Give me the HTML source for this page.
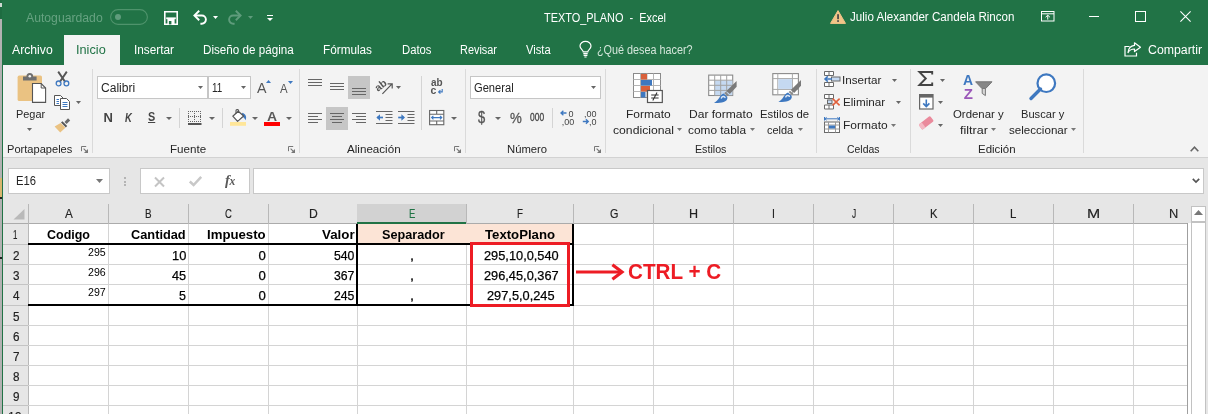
<!DOCTYPE html>
<html><head><meta charset="utf-8"><title>TEXTO_PLANO - Excel</title>
<style>
html,body{margin:0;padding:0;}
body{width:1208px;height:414px;position:relative;overflow:hidden;background:#fff;
font-family:"Liberation Sans",sans-serif;}
.t{position:absolute;white-space:pre;transform-origin:0 50%;font-family:"Liberation Sans",sans-serif;}
svg{overflow:visible;}
</style></head><body><div style="position:absolute;left:0;top:0;width:1208px;height:414px;will-change:transform">
<div style="position:absolute;left:0px;top:0px;width:1208px;height:65px;background:#217346;"></div>
<div style="position:absolute;left:64px;top:35px;width:56px;height:30px;background:#f3f3f3;"></div>
<div style="position:absolute;left:0px;top:65px;width:1208px;height:92px;background:#f3f3f3;"></div>
<div style="position:absolute;left:0px;top:157px;width:1208px;height:1px;background:#d2d2d2;"></div>
<div style="position:absolute;left:0px;top:158px;width:1208px;height:66px;background:#e6e6e6;"></div>
<div style="position:absolute;left:0px;top:0px;width:2px;height:19px;background:#1e6c41;"></div>
<div style="position:absolute;left:0px;top:3px;width:2px;height:4px;background:#cfd8d2;"></div>
<div style="position:absolute;left:0px;top:19px;width:2px;height:395px;background:#b2b2b2;"></div>
<div style="position:absolute;left:0px;top:178px;width:2px;height:19px;background:#d8b66e;"></div>
<div style="position:absolute;left:0px;top:197px;width:2px;height:2px;background:#222;"></div>
<div style="position:absolute;left:0px;top:257px;width:2px;height:2px;background:#222;"></div>
<div style="position:absolute;left:2px;top:0px;width:1px;height:414px;background:#217346;"></div>
<div style="position:absolute;left:92px;top:69px;width:1px;height:84px;background:#dadada;"></div>
<div style="position:absolute;left:299px;top:69px;width:1px;height:84px;background:#dadada;"></div>
<div style="position:absolute;left:465px;top:69px;width:1px;height:84px;background:#dadada;"></div>
<div style="position:absolute;left:605px;top:69px;width:1px;height:84px;background:#dadada;"></div>
<div style="position:absolute;left:816px;top:69px;width:1px;height:84px;background:#dadada;"></div>
<div style="position:absolute;left:910px;top:69px;width:1px;height:84px;background:#dadada;"></div>
<div style="position:absolute;left:1083px;top:69px;width:1px;height:84px;background:#dadada;"></div>
<div style="position:absolute;left:179px;top:108px;width:1px;height:20px;background:#d4d4d4;"></div>
<div style="position:absolute;left:222px;top:108px;width:1px;height:20px;background:#d4d4d4;"></div>
<div style="position:absolute;left:421px;top:76px;width:1px;height:54px;background:#d4d4d4;"></div>
<div style="position:absolute;left:552px;top:108px;width:1px;height:20px;background:#d4d4d4;"></div>
<div style="position:absolute;left:97px;top:76px;width:109px;height:21px;background:#fff;border:1px solid #c6c6c6;"></div>
<div style="position:absolute;left:208px;top:76px;width:41px;height:21px;background:#fff;border:1px solid #c6c6c6;"></div>
<div style="position:absolute;left:470px;top:76px;width:129px;height:21px;background:#fff;border:1px solid #c6c6c6;"></div>
<svg style="position:absolute;left:198.0px;top:86px" width="5" height="3" viewBox="0 0 5 3"><path d="M0 0H5L2.5 3Z" fill="#666"/></svg>
<svg style="position:absolute;left:240.5px;top:86px" width="5" height="3" viewBox="0 0 5 3"><path d="M0 0H5L2.5 3Z" fill="#666"/></svg>
<svg style="position:absolute;left:590.5px;top:86px" width="5" height="3" viewBox="0 0 5 3"><path d="M0 0H5L2.5 3Z" fill="#666"/></svg>
<div style="position:absolute;left:348px;top:76px;width:22px;height:23px;background:#c6c6c6;"></div>
<div style="position:absolute;left:326px;top:107px;width:22px;height:23px;background:#c6c6c6;"></div>
<svg style="position:absolute;left:81px;top:146px" width="7" height="7" viewBox="0 0 7 7"><path d="M0.5 5.2V0.5H5.2" fill="none" stroke="#777" stroke-width="1"/><path d="M2.6 2.6L5.6 5.6" stroke="#777" stroke-width="1.1"/><path d="M7 3V7H3Z" fill="#777"/></svg>
<svg style="position:absolute;left:288px;top:146px" width="7" height="7" viewBox="0 0 7 7"><path d="M0.5 5.2V0.5H5.2" fill="none" stroke="#777" stroke-width="1"/><path d="M2.6 2.6L5.6 5.6" stroke="#777" stroke-width="1.1"/><path d="M7 3V7H3Z" fill="#777"/></svg>
<svg style="position:absolute;left:454px;top:146px" width="7" height="7" viewBox="0 0 7 7"><path d="M0.5 5.2V0.5H5.2" fill="none" stroke="#777" stroke-width="1"/><path d="M2.6 2.6L5.6 5.6" stroke="#777" stroke-width="1.1"/><path d="M7 3V7H3Z" fill="#777"/></svg>
<svg style="position:absolute;left:594px;top:146px" width="7" height="7" viewBox="0 0 7 7"><path d="M0.5 5.2V0.5H5.2" fill="none" stroke="#777" stroke-width="1"/><path d="M2.6 2.6L5.6 5.6" stroke="#777" stroke-width="1.1"/><path d="M7 3V7H3Z" fill="#777"/></svg>
<svg style="position:absolute;left:1190px;top:146px" width="9" height="6" viewBox="0 0 9 6"><path d="M0.7 5.2L4.5 1.2L8.3 5.2" fill="none" stroke="#666" stroke-width="1.6"/></svg>
<div style="position:absolute;left:8px;top:168px;width:100px;height:24px;background:#fff;border:1px solid #c8c8c8;"></div>
<svg style="position:absolute;left:96.0px;top:179px" width="7" height="4" viewBox="0 0 7 4"><path d="M0 0H7L3.5 4Z" fill="#777"/></svg>
<div style="position:absolute;left:124px;top:177px;width:2px;height:2px;background:#b4b4b4;"></div>
<div style="position:absolute;left:124px;top:180.5px;width:2px;height:2px;background:#b4b4b4;"></div>
<div style="position:absolute;left:124px;top:184px;width:2px;height:2px;background:#b4b4b4;"></div>
<div style="position:absolute;left:140px;top:168px;width:108px;height:24px;background:#fff;border:1px solid #c8c8c8;"></div>
<div style="position:absolute;left:253px;top:168px;width:949px;height:24px;background:#fff;border:1px solid #c8c8c8;"></div>
<svg style="position:absolute;left:153.5px;top:176.5px" width="11" height="10" viewBox="0 0 11 10"><path d="M1 0.5L10 9.5M10 0.5L1 9.5" stroke="#c4c4c4" stroke-width="2" fill="none"/></svg>
<svg style="position:absolute;left:189px;top:176px" width="13" height="10" viewBox="0 0 13 10"><path d="M0.8 5.5L4.6 9L12.2 0.8" stroke="#c8c8c8" stroke-width="2.5" fill="none"/></svg>
<div class="t" style="left:225px;top:171px;font-family:'Liberation Serif',serif;font-style:italic;font-size:14.5px;line-height:18px;color:#5a5a5a;letter-spacing:-0.3px;font-weight:700">f<span style="font-size:11.5px">x</span></div>
<svg style="position:absolute;left:1192px;top:178px" width="8" height="5" viewBox="0 0 8 5"><path d="M0.8 0.8L4 4L7.2 0.8" fill="none" stroke="#555" stroke-width="1.7"/></svg>
<div style="position:absolute;left:28px;top:224px;width:1160px;height:190px;background:#fff;"></div>
<div style="position:absolute;left:3px;top:224px;width:25px;height:190px;background:#e6e6e6;"></div>
<div style="position:absolute;left:357px;top:204px;width:110px;height:18px;background:#d2d2d2;"></div>
<div style="position:absolute;left:357px;top:222px;width:110px;height:2px;background:#217346;"></div>
<div style="position:absolute;left:3px;top:223px;width:354px;height:1px;background:#ababab;"></div>
<div style="position:absolute;left:467px;top:223px;width:721px;height:1px;background:#ababab;"></div>
<div style="position:absolute;left:28px;top:204px;width:1px;height:20px;background:#b8b8b8;"></div>
<div style="position:absolute;left:108px;top:204px;width:1px;height:20px;background:#b8b8b8;"></div>
<div style="position:absolute;left:188px;top:204px;width:1px;height:20px;background:#b8b8b8;"></div>
<div style="position:absolute;left:268px;top:204px;width:1px;height:20px;background:#b8b8b8;"></div>
<div style="position:absolute;left:466px;top:204px;width:1px;height:20px;background:#b8b8b8;"></div>
<div style="position:absolute;left:573px;top:204px;width:1px;height:20px;background:#b8b8b8;"></div>
<div style="position:absolute;left:653px;top:204px;width:1px;height:20px;background:#b8b8b8;"></div>
<div style="position:absolute;left:733px;top:204px;width:1px;height:20px;background:#b8b8b8;"></div>
<div style="position:absolute;left:813px;top:204px;width:1px;height:20px;background:#b8b8b8;"></div>
<div style="position:absolute;left:893px;top:204px;width:1px;height:20px;background:#b8b8b8;"></div>
<div style="position:absolute;left:973px;top:204px;width:1px;height:20px;background:#b8b8b8;"></div>
<div style="position:absolute;left:1053px;top:204px;width:1px;height:20px;background:#b8b8b8;"></div>
<div style="position:absolute;left:1133px;top:204px;width:1px;height:20px;background:#b8b8b8;"></div>
<div style="position:absolute;left:108px;top:224px;width:1px;height:190px;background:#d4d4d4;"></div>
<div style="position:absolute;left:188px;top:224px;width:1px;height:190px;background:#d4d4d4;"></div>
<div style="position:absolute;left:268px;top:224px;width:1px;height:190px;background:#d4d4d4;"></div>
<div style="position:absolute;left:357px;top:224px;width:1px;height:190px;background:#d4d4d4;"></div>
<div style="position:absolute;left:466px;top:224px;width:1px;height:190px;background:#d4d4d4;"></div>
<div style="position:absolute;left:573px;top:224px;width:1px;height:190px;background:#d4d4d4;"></div>
<div style="position:absolute;left:653px;top:224px;width:1px;height:190px;background:#d4d4d4;"></div>
<div style="position:absolute;left:733px;top:224px;width:1px;height:190px;background:#d4d4d4;"></div>
<div style="position:absolute;left:813px;top:224px;width:1px;height:190px;background:#d4d4d4;"></div>
<div style="position:absolute;left:893px;top:224px;width:1px;height:190px;background:#d4d4d4;"></div>
<div style="position:absolute;left:973px;top:224px;width:1px;height:190px;background:#d4d4d4;"></div>
<div style="position:absolute;left:1053px;top:224px;width:1px;height:190px;background:#d4d4d4;"></div>
<div style="position:absolute;left:1133px;top:224px;width:1px;height:190px;background:#d4d4d4;"></div>
<div style="position:absolute;left:28px;top:224px;width:1px;height:190px;background:#b8b8b8;"></div>
<div style="position:absolute;left:28px;top:244px;width:1160px;height:1px;background:#d4d4d4;"></div>
<div style="position:absolute;left:3px;top:244px;width:25px;height:1px;background:#c4c4c4;"></div>
<div style="position:absolute;left:28px;top:264px;width:1160px;height:1px;background:#d4d4d4;"></div>
<div style="position:absolute;left:3px;top:264px;width:25px;height:1px;background:#c4c4c4;"></div>
<div style="position:absolute;left:28px;top:284px;width:1160px;height:1px;background:#d4d4d4;"></div>
<div style="position:absolute;left:3px;top:284px;width:25px;height:1px;background:#c4c4c4;"></div>
<div style="position:absolute;left:28px;top:305px;width:1160px;height:1px;background:#d4d4d4;"></div>
<div style="position:absolute;left:3px;top:305px;width:25px;height:1px;background:#c4c4c4;"></div>
<div style="position:absolute;left:28px;top:325px;width:1160px;height:1px;background:#d4d4d4;"></div>
<div style="position:absolute;left:3px;top:325px;width:25px;height:1px;background:#c4c4c4;"></div>
<div style="position:absolute;left:28px;top:345px;width:1160px;height:1px;background:#d4d4d4;"></div>
<div style="position:absolute;left:3px;top:345px;width:25px;height:1px;background:#c4c4c4;"></div>
<div style="position:absolute;left:28px;top:365px;width:1160px;height:1px;background:#d4d4d4;"></div>
<div style="position:absolute;left:3px;top:365px;width:25px;height:1px;background:#c4c4c4;"></div>
<div style="position:absolute;left:28px;top:385px;width:1160px;height:1px;background:#d4d4d4;"></div>
<div style="position:absolute;left:3px;top:385px;width:25px;height:1px;background:#c4c4c4;"></div>
<div style="position:absolute;left:28px;top:405px;width:1160px;height:1px;background:#d4d4d4;"></div>
<div style="position:absolute;left:3px;top:405px;width:25px;height:1px;background:#c4c4c4;"></div>
<div style="position:absolute;left:28px;top:425px;width:1160px;height:1px;background:#d4d4d4;"></div>
<div style="position:absolute;left:3px;top:425px;width:25px;height:1px;background:#c4c4c4;"></div>
<div style="position:absolute;left:358px;top:224px;width:214px;height:19px;background:#fce4d6;"></div>
<svg style="position:absolute;left:13px;top:209px" width="12" height="11" viewBox="0 0 12 11"><path d="M11.5 0V10.5H0.5Z" fill="#b9b9b9"/></svg>
<div style="position:absolute;left:28px;top:243px;width:546px;height:2px;background:#000;"></div>
<div style="position:absolute;left:28px;top:304px;width:546px;height:2px;background:#000;"></div>
<div style="position:absolute;left:356px;top:224px;width:2px;height:82px;background:#000;"></div>
<div style="position:absolute;left:572px;top:224px;width:2px;height:82px;background:#000;"></div>
<div style="position:absolute;left:470px;top:242px;width:94px;height:59px;background:transparent;border:3px solid #ed1c24;"></div>
<svg style="position:absolute;left:576px;top:262px" width="50" height="20" viewBox="0 0 50 20"><path d="M0 10H46" stroke="#ed1c24" stroke-width="3.2" fill="none"/><path d="M36.4 2.8L46 10L36.4 17.2" stroke="#ed1c24" stroke-width="3.2" fill="none" stroke-linejoin="miter"/></svg>
<div style="position:absolute;left:1188px;top:204px;width:20px;height:210px;background:#e6e6e6;"></div>
<div style="position:absolute;left:1187px;top:223px;width:1px;height:191px;background:#9f9f9f;"></div>
<div style="position:absolute;left:1188px;top:223px;width:3px;height:191px;background:#fff;"></div>
<div style="position:absolute;left:1191px;top:206px;width:13px;height:14px;background:#fff;border:1px solid #c2c2c2;"></div>
<div style="position:absolute;left:1191px;top:222px;width:13px;height:192px;background:#fff;border:1px solid #c2c2c2;"></div>
<svg style="position:absolute;left:1194px;top:210px" width="9" height="5" viewBox="0 0 9 5"><path d="M0 5L4.5 0L9 5Z" fill="#777"/></svg>
<svg style="position:absolute;left:110px;top:9px" width="38" height="16" viewBox="0 0 38 16"><rect x="0.6" y="0.6" width="36.8" height="14.8" rx="7.4" fill="none" stroke="#4f936c" stroke-width="1.1"/><circle cx="8" cy="8" r="3" fill="#5f9c7c"/></svg>
<svg style="position:absolute;left:164px;top:11px" width="14" height="14" viewBox="0 0 14 14"><path d="M0.8 0.8H13.2V13.2H0.8Z" fill="none" stroke="#fff" stroke-width="1.6"/><rect x="2.2" y="6.4" width="9.6" height="1.8" fill="#fff"/><rect x="3.4" y="8" width="7.2" height="5.2" fill="#fff"/><rect x="4.9" y="10" width="2.5" height="3.4" fill="#217346"/></svg>
<svg style="position:absolute;left:193px;top:10px" width="15" height="15" viewBox="0 0 15 15"><path d="M2.2 5.5H8.8A4.1 4.1 0 0 1 8.8 13.7H7.4" fill="none" stroke="#fff" stroke-width="1.9"/><path d="M6.2 0.8L1.4 5.5L6.2 10.2" fill="none" stroke="#fff" stroke-width="1.9"/></svg>
<svg style="position:absolute;left:213.0px;top:16px" width="5" height="3" viewBox="0 0 5 3"><path d="M0 0H5L2.5 3Z" fill="#fff"/></svg>
<svg style="position:absolute;left:227px;top:10px" width="15" height="15" viewBox="0 0 15 15"><path d="M12.8 5.5H6.2A4.1 4.1 0 0 0 6.2 13.7H7.6" fill="none" stroke="#5f9c7c" stroke-width="1.9"/><path d="M8.8 0.8L13.6 5.5L8.8 10.2" fill="none" stroke="#5f9c7c" stroke-width="1.9"/></svg>
<svg style="position:absolute;left:248.0px;top:16px" width="5" height="3" viewBox="0 0 5 3"><path d="M0 0H5L2.5 3Z" fill="#5f9c7c"/></svg>
<div style="position:absolute;left:266.5px;top:15px;width:6px;height:1px;background:#fff;"></div>
<svg style="position:absolute;left:266.5px;top:18px" width="6" height="3" viewBox="0 0 6 3"><path d="M0 0H6L3.0 3Z" fill="#fff"/></svg>
<svg style="position:absolute;left:829.5px;top:9.5px" width="16" height="14" viewBox="0 0 16 14"><path d="M8 0.6L15.5 13.4H0.5Z" fill="#f2c488" stroke="#f2c488" stroke-width="1" stroke-linejoin="round"/><rect x="7.2" y="4.2" width="1.7" height="5" fill="#444"/><rect x="7.2" y="10.2" width="1.7" height="1.7" fill="#444"/></svg>
<svg style="position:absolute;left:1041px;top:11px" width="14" height="11" viewBox="0 0 14 11"><rect x="0.5" y="0.5" width="12.5" height="9.5" fill="none" stroke="#fff" stroke-width="1"/><path d="M0.5 2.8H13" stroke="#fff" stroke-width="1"/><path d="M6.75 8.6V4.4M4.6 6.2L6.75 4.2L8.9 6.2" fill="none" stroke="#fff" stroke-width="1"/></svg>
<div style="position:absolute;left:1088.5px;top:16px;width:10.5px;height:1px;background:#fff;"></div>
<div style="position:absolute;left:1135px;top:11px;width:9px;height:9px;background:transparent;border:1px solid #fff;"></div>
<svg style="position:absolute;left:1180px;top:11px" width="11" height="11" viewBox="0 0 11 11"><path d="M0.4 0.4L10.6 10.6M10.6 0.4L0.4 10.6" stroke="#fff" stroke-width="1.1"/></svg>
<svg style="position:absolute;left:579px;top:41px" width="13" height="17" viewBox="0 0 13 17"><path d="M4.2 10.8C4.2 9 1 7.8 1 5A5.5 4.6 0 0 1 12 5C12 7.8 8.8 9 8.8 10.8Z" fill="none" stroke="#fff" stroke-width="1.2"/><path d="M4.3 12.6H8.7M4.6 14.4H8.4M5.4 16H7.6" stroke="#fff" stroke-width="1.1"/></svg>
<svg style="position:absolute;left:1124px;top:42px" width="18" height="15" viewBox="0 0 18 15"><path d="M5.5 4.5H1V14H12.5V10.8" fill="none" stroke="#fff" stroke-width="1.2"/><path d="M10.5 0.8L16.5 5.2L10.5 9.6V7C7.5 7 5.4 8.2 4 10.6C4.4 6.4 6.8 3.8 10.5 3.4Z" fill="none" stroke="#fff" stroke-width="1.2" stroke-linejoin="round"/></svg>
<svg style="position:absolute;left:17px;top:72px" width="30" height="32" viewBox="0 0 30 32"><rect x="0.6" y="3.6" width="24.4" height="25.4" rx="1.6" fill="#eac282"/><path d="M6 8.4V4.6H9.4A3.4 3.6 0 0 1 16.2 4.6H19.6V8.4Z" fill="#707070"/><circle cx="12.8" cy="4.2" r="1.3" fill="#f3f3f3"/><path d="M15.5 11.5H24.2L28.6 16V30.4H15.5Z" fill="#fff" stroke="#555" stroke-width="1.1"/><path d="M24.2 11.5V16H28.6" fill="none" stroke="#555" stroke-width="1"/></svg>
<svg style="position:absolute;left:27.0px;top:128px" width="5" height="3" viewBox="0 0 5 3"><path d="M0 0H5L2.5 3Z" fill="#666"/></svg>
<svg style="position:absolute;left:55px;top:71px" width="15" height="16" viewBox="0 0 15 16"><path d="M3.2 0.6L10.4 11.2M11.8 0.6L4.6 11.2" stroke="#555" stroke-width="1.9" fill="none"/><circle cx="3.6" cy="12.4" r="2.4" fill="none" stroke="#3e78c0" stroke-width="1.3"/><circle cx="11.4" cy="12.4" r="2.4" fill="none" stroke="#3e78c0" stroke-width="1.3"/></svg>
<svg style="position:absolute;left:53.5px;top:95px" width="17" height="15" viewBox="0 0 17 15"><path d="M0.5 0.5H6.5L9 3V10.5H0.5Z" fill="#fff" stroke="#555" stroke-width="1"/><path d="M6.5 3.5H12.5L15.5 6.5V14.5H6.5Z" fill="#fff" stroke="#555" stroke-width="1"/><path d="M2.5 4.5H5M2.5 6.5H5M2.5 8.5H5" stroke="#3e78c0" stroke-width="1"/><path d="M8.5 7.5H13.5M8.5 9.5H13.5M8.5 11.5H13.5" stroke="#3e78c0" stroke-width="1"/></svg>
<svg style="position:absolute;left:75.5px;top:101px" width="5" height="3" viewBox="0 0 5 3"><path d="M0 0H5L2.5 3Z" fill="#666"/></svg>
<svg style="position:absolute;left:54px;top:117px" width="17" height="16" viewBox="0 0 17 16"><path d="M10.5 5L14 1.2L16.2 3.4L12.6 7Z" fill="#6a6a6a"/><path d="M8.4 4.2L13.2 9L11.8 10.4L7 5.6Z" fill="#555"/><path d="M6.6 6L11.4 10.8L6.2 15.4L0.6 9.4Z" fill="#eac282"/></svg>
<div class="t" style="left:257.3px;top:79px;font-size:15px;line-height:18px;color:#555;transform:scaleX(0.95)">A</div>
<svg style="position:absolute;left:265.5px;top:80px" width="5" height="3" viewBox="0 0 5 3"><path d="M0 3L2.5 0L5 3Z" fill="#3e78c0"/></svg>
<div class="t" style="left:279.5px;top:82px;font-size:12px;line-height:15px;color:#555;transform:scaleX(0.95)">A</div>
<svg style="position:absolute;left:287.5px;top:80.5px" width="5" height="3" viewBox="0 0 5 3"><path d="M0 0H5L2.5 3Z" fill="#3e78c0"/></svg>
<svg style="position:absolute;left:188px;top:111px" width="14" height="15" viewBox="0 0 14 15"><rect x="0" y="0" width="1" height="1" fill="#666"/><rect x="2" y="0" width="1" height="1" fill="#666"/><rect x="4" y="0" width="1" height="1" fill="#666"/><rect x="6" y="0" width="1" height="1" fill="#666"/><rect x="8" y="0" width="1" height="1" fill="#666"/><rect x="10" y="0" width="1" height="1" fill="#666"/><rect x="12" y="0" width="1" height="1" fill="#666"/><rect x="0" y="2" width="1" height="1" fill="#666"/><rect x="6" y="2" width="1" height="1" fill="#666"/><rect x="12" y="2" width="1" height="1" fill="#666"/><rect x="0" y="4" width="1" height="1" fill="#666"/><rect x="6" y="4" width="1" height="1" fill="#666"/><rect x="12" y="4" width="1" height="1" fill="#666"/><rect x="0" y="5" width="1" height="1" fill="#666"/><rect x="2" y="5" width="1" height="1" fill="#666"/><rect x="4" y="5" width="1" height="1" fill="#666"/><rect x="6" y="5" width="1" height="1" fill="#666"/><rect x="8" y="5" width="1" height="1" fill="#666"/><rect x="10" y="5" width="1" height="1" fill="#666"/><rect x="12" y="5" width="1" height="1" fill="#666"/><rect x="0" y="6" width="1" height="1" fill="#666"/><rect x="6" y="6" width="1" height="1" fill="#666"/><rect x="12" y="6" width="1" height="1" fill="#666"/><rect x="0" y="8" width="1" height="1" fill="#666"/><rect x="6" y="8" width="1" height="1" fill="#666"/><rect x="12" y="8" width="1" height="1" fill="#666"/><rect x="0" y="10" width="1" height="1" fill="#666"/><rect x="2" y="10" width="1" height="1" fill="#666"/><rect x="4" y="10" width="1" height="1" fill="#666"/><rect x="6" y="10" width="1" height="1" fill="#666"/><rect x="8" y="10" width="1" height="1" fill="#666"/><rect x="10" y="10" width="1" height="1" fill="#666"/><rect x="12" y="10" width="1" height="1" fill="#666"/><rect x="0" y="12" width="13.5" height="2" fill="#555"/></svg>
<svg style="position:absolute;left:208.5px;top:116.6px" width="6" height="3" viewBox="0 0 6 3"><path d="M0 0H6L3.0 3Z" fill="#666"/></svg>
<svg style="position:absolute;left:230px;top:109px" width="17" height="18" viewBox="0 0 17 18"><path d="M12.2 3.8C15.8 4.8 17 8 15.6 11.2C14.8 9.2 13.6 8 11.8 7.4Z" fill="#3e78c0"/><path d="M2.8 7.2L8.2 2.2L13.6 7L7.6 12.4Z" fill="#fff" stroke="#555" stroke-width="1.2" stroke-linejoin="round"/><path d="M6 4.6V1.6Q6 0.6 7 0.6H7.6Q8.6 0.6 8.6 1.6V3.2" fill="none" stroke="#555" stroke-width="1.1"/><rect x="0" y="13" width="16" height="3.8" fill="#ffe699"/></svg>
<svg style="position:absolute;left:251.5px;top:116.6px" width="6" height="3" viewBox="0 0 6 3"><path d="M0 0H6L3.0 3Z" fill="#666"/></svg>
<div class="t" style="left:267.3px;top:107.8px;font-size:13.6px;line-height:18px;color:#5a5a5a;font-weight:700;transform:scaleX(1.03)">A</div>
<div style="position:absolute;left:264px;top:122px;width:16px;height:3.8px;background:#ff0000;"></div>
<svg style="position:absolute;left:285.5px;top:116.6px" width="6" height="3" viewBox="0 0 6 3"><path d="M0 0H6L3.0 3Z" fill="#666"/></svg>
<svg style="position:absolute;left:165.5px;top:116.6px" width="6" height="3" viewBox="0 0 6 3"><path d="M0 0H6L3.0 3Z" fill="#666"/></svg>
<div style="position:absolute;left:308px;top:79px;width:14px;height:1px;background:#666;"></div><div style="position:absolute;left:308px;top:82px;width:14px;height:1px;background:#666;"></div><div style="position:absolute;left:308px;top:85px;width:14px;height:1px;background:#666;"></div>
<div style="position:absolute;left:330px;top:83px;width:14px;height:1px;background:#666;"></div><div style="position:absolute;left:330px;top:86px;width:14px;height:1px;background:#666;"></div><div style="position:absolute;left:330px;top:89px;width:14px;height:1px;background:#666;"></div>
<div style="position:absolute;left:352px;top:88px;width:14px;height:1px;background:#666;"></div><div style="position:absolute;left:352px;top:91px;width:14px;height:1px;background:#666;"></div><div style="position:absolute;left:352px;top:94px;width:14px;height:1px;background:#666;"></div>
<div style="position:absolute;left:308px;top:113.0px;width:14px;height:1px;background:#666;"></div><div style="position:absolute;left:308px;top:116.05px;width:10px;height:1px;background:#666;"></div><div style="position:absolute;left:308px;top:119.1px;width:14px;height:1px;background:#666;"></div><div style="position:absolute;left:308px;top:122.15px;width:10px;height:1px;background:#666;"></div>
<div style="position:absolute;left:330.0px;top:113.0px;width:14px;height:1px;background:#666;"></div><div style="position:absolute;left:332.0px;top:116.05px;width:10px;height:1px;background:#666;"></div><div style="position:absolute;left:330.0px;top:119.1px;width:14px;height:1px;background:#666;"></div><div style="position:absolute;left:332.0px;top:122.15px;width:10px;height:1px;background:#666;"></div>
<div style="position:absolute;left:352px;top:113.0px;width:14px;height:1px;background:#666;"></div><div style="position:absolute;left:356px;top:116.05px;width:10px;height:1px;background:#666;"></div><div style="position:absolute;left:352px;top:119.1px;width:14px;height:1px;background:#666;"></div><div style="position:absolute;left:356px;top:122.15px;width:10px;height:1px;background:#666;"></div>
<svg style="position:absolute;left:376px;top:79px" width="17" height="16" viewBox="0 0 17 16"><text x="-0.5" y="10" font-family="Liberation Sans" font-size="10.5" fill="#555" font-weight="700" transform="rotate(-38 5 8)">ab</text><path d="M6.4 14.8L15.8 5.2M16.2 9.4V4.8H11.6" fill="none" stroke="#555" stroke-width="1.2"/></svg>
<svg style="position:absolute;left:396.0px;top:86px" width="5" height="3" viewBox="0 0 5 3"><path d="M0 0H5L2.5 3Z" fill="#666"/></svg>
<svg style="position:absolute;left:376px;top:111px" width="17" height="14" viewBox="0 0 17 14"><path d="M0 0.5H16.5M9.5 3.5H16.5M9.5 6.5H16.5M9.5 9.5H16.5M0 12.5H16.5" stroke="#666" stroke-width="1"/><path d="M7 6.5H1.2" fill="none" stroke="#3e78c0" stroke-width="1.7"/><path d="M4 3.2L0.4 6.5L4 9.8Z" fill="#3e78c0"/></svg>
<svg style="position:absolute;left:397.5px;top:111px" width="17" height="14" viewBox="0 0 17 14"><path d="M0 0.5H16.5M9.5 3.5H16.5M9.5 6.5H16.5M9.5 9.5H16.5M0 12.5H16.5" stroke="#666" stroke-width="1"/><path d="M0.2 6.5H6" fill="none" stroke="#3e78c0" stroke-width="1.7"/><path d="M3.4 3.2L7 6.5L3.4 9.8Z" fill="#3e78c0"/></svg>
<div class="t" style="left:430.5px;top:76.5px;font-size:10.5px;line-height:10px;color:#555;font-weight:700;transform:scaleX(0.95)">ab</div>
<div class="t" style="left:430.5px;top:85px;font-size:10.5px;line-height:10px;color:#555;font-weight:700">c</div>
<svg style="position:absolute;left:437.8px;top:88.6px" width="5" height="5" viewBox="0 0 5 5"><path d="M4.2 0V2.9H0.8M2.4 1.2L0.6 2.9L2.4 4.6" fill="none" stroke="#3e78c0" stroke-width="1.1"/></svg>
<svg style="position:absolute;left:429px;top:110px" width="16" height="15" viewBox="0 0 16 15"><rect x="0.6" y="0.5" width="14.2" height="14.2" fill="#fff" stroke="#666" stroke-width="1.1"/><path d="M0.6 4.2H14.8M0.6 11H14.8M7.7 0.5V4.2M7.7 11V14.7" stroke="#666" stroke-width="1.1"/><path d="M2.6 7.6H12.8M4.4 5.9L2.6 7.6L4.4 9.3M11 5.9L12.8 7.6L11 9.3" fill="none" stroke="#3e78c0" stroke-width="1.1"/></svg>
<svg style="position:absolute;left:450.5px;top:116.6px" width="6" height="3" viewBox="0 0 6 3"><path d="M0 0H6L3.0 3Z" fill="#666"/></svg>
<svg style="position:absolute;left:494.5px;top:116.6px" width="6" height="3" viewBox="0 0 6 3"><path d="M0 0H6L3.0 3Z" fill="#666"/></svg>
<svg style="position:absolute;left:560px;top:110px" width="15" height="15" viewBox="0 0 15 15"><path d="M6.5 3H1.2M3.4 0.8L1 3L3.4 5.2" fill="none" stroke="#3e78c0" stroke-width="1.3"/><text x="8.6" y="6.8" font-family="Liberation Sans" font-size="9" fill="#444">0</text><text x="1.8" y="15" font-family="Liberation Sans" font-size="9" fill="#444">,00</text></svg>
<svg style="position:absolute;left:582px;top:110px" width="15" height="15" viewBox="0 0 15 15"><path d="M0.8 11.5H6.1M3.9 9.3L6.3 11.5L3.9 13.7" fill="none" stroke="#3e78c0" stroke-width="1.3"/><text x="2" y="6.8" font-family="Liberation Sans" font-size="9" fill="#444">,00</text><text x="7" y="15" font-family="Liberation Sans" font-size="9" fill="#444">,0</text></svg>
<svg style="position:absolute;left:633px;top:72.5px" width="31" height="31" viewBox="0 0 31 31"><rect x="0.5" y="0.5" width="27" height="24" fill="#fff" stroke="#8a8a8a" stroke-width="1"/><path d="M0.5 6.5H27.5M0.5 12.5H27.5M0.5 18.5H27.5M7.5 0.5V24.5M14 0.5V24.5M20.5 0.5V24.5" stroke="#b5b5b5" stroke-width="1"/><rect x="8" y="1" width="6" height="5.5" fill="#d9603b"/><rect x="8" y="7" width="11" height="5.5" fill="#3e78c0"/><rect x="8" y="13" width="9" height="5.5" fill="#d9603b"/><rect x="8" y="19" width="4.5" height="5.5" fill="#3e78c0"/><rect x="14.5" y="17.5" width="14.8" height="12" fill="#fff" stroke="#555" stroke-width="1.2"/><path d="M18.2 22H25.6M18.2 25H25.6M24 19.6L19.8 27.6" stroke="#333" stroke-width="1.1" fill="none"/></svg>
<svg style="position:absolute;left:677.0px;top:128.2px" width="5" height="3" viewBox="0 0 5 3"><path d="M0 0H5L2.5 3Z" fill="#777"/></svg>
<svg style="position:absolute;left:707.5px;top:74px" width="31" height="30" viewBox="0 0 31 30"><rect x="0.7" y="1.1" width="24" height="20.4" fill="#fff" stroke="#8a8a8a" stroke-width="1.1"/><rect x="6.8" y="6.4" width="17.6" height="14.8" fill="#c5d9f1"/><path d="M0.7 6.2H24.7M0.7 11.3H24.7M0.7 16.4H24.7M6.7 1.1V21.5M12.7 1.1V21.5M18.7 1.1V21.5" stroke="#a2a2a2" stroke-width="1"/><g transform="translate(5.8 6.6)"><path d="M22.8 0.4V6.2L16 13.4L12.6 10.4Z" fill="#7a7a7a"/><path d="M11.8 11.2L15.2 14.2L13.8 15.6L10.4 12.6Z" fill="#8a8a8a"/><path d="M9.8 13C5.4 14.6 5.6 20 0.2 22.2C8.4 23.2 14.8 20.8 13.4 16.2Z" fill="#3e78c0"/><path d="M7.6 17.4C8.4 15.6 10.2 15.4 11.2 16.8" stroke="#dbe7f6" stroke-width="1.5" fill="none" stroke-linecap="round"/></g></svg>
<svg style="position:absolute;left:750.0px;top:128.2px" width="5" height="3" viewBox="0 0 5 3"><path d="M0 0H5L2.5 3Z" fill="#777"/></svg>
<svg style="position:absolute;left:771.5px;top:72.5px" width="31" height="30" viewBox="0 0 31 30"><rect x="0.8" y="0.6" width="25.6" height="21.2" fill="#fff" stroke="#8a8a8a" stroke-width="1.1"/><path d="M0.8 5.6H26.4M0.8 16.4H26.4M5.8 0.6V21.8M20.4 0.6V21.8" stroke="#a8a8a8" stroke-width="1"/><rect x="6.3" y="6.1" width="13.6" height="9.8" fill="#c5d9f1"/><g transform="translate(6.2 6.5)"><path d="M22.8 0.4V6.2L16 13.4L12.6 10.4Z" fill="#7a7a7a"/><path d="M11.8 11.2L15.2 14.2L13.8 15.6L10.4 12.6Z" fill="#8a8a8a"/><path d="M9.8 13C5.4 14.6 5.6 20 0.2 22.2C8.4 23.2 14.8 20.8 13.4 16.2Z" fill="#3e78c0"/><path d="M7.6 17.4C8.4 15.6 10.2 15.4 11.2 16.8" stroke="#dbe7f6" stroke-width="1.5" fill="none" stroke-linecap="round"/></g></svg>
<svg style="position:absolute;left:798.0px;top:128.2px" width="5" height="3" viewBox="0 0 5 3"><path d="M0 0H5L2.5 3Z" fill="#777"/></svg>
<svg style="position:absolute;left:824px;top:71px" width="17" height="16" viewBox="0 0 17 16"><path d="M0.5 0.5H9.5V4.5H0.5ZM5 0.5V4.5M0.5 11.5H9.5V15.5H0.5ZM5 11.5V15.5" fill="#fff" stroke="#6a6a6a" stroke-width="1"/><rect x="7.5" y="6" width="8.5" height="4" fill="#c5d9f1" stroke="#6a6a6a" stroke-width="1"/><path d="M8 8H1.2M3.8 5.4L1 8L3.8 10.6" fill="none" stroke="#3e78c0" stroke-width="1.5"/></svg>
<svg style="position:absolute;left:892.0px;top:79px" width="5" height="3" viewBox="0 0 5 3"><path d="M0 0H5L2.5 3Z" fill="#666"/></svg>
<svg style="position:absolute;left:824px;top:94px" width="17" height="16" viewBox="0 0 17 16"><path d="M0.5 0.5H9.5V4.5H0.5ZM5 0.5V4.5M0.5 11H9.5V15H0.5ZM5 11V15" fill="#fff" stroke="#6a6a6a" stroke-width="1"/><rect x="3.5" y="6" width="4.5" height="3.5" fill="#c5d9f1" stroke="#6a6a6a" stroke-width="1"/><path d="M8.6 4.6L15.6 11.4M15.6 4.6L8.6 11.4" stroke="#e0603c" stroke-width="1.6" fill="none"/></svg>
<svg style="position:absolute;left:896.0px;top:101px" width="5" height="3" viewBox="0 0 5 3"><path d="M0 0H5L2.5 3Z" fill="#666"/></svg>
<svg style="position:absolute;left:824px;top:116.5px" width="17" height="16" viewBox="0 0 17 16"><path d="M0.5 0V3.6M15.5 0V3.6M0.5 1.8H15.5M2.6 0.4L0.8 1.8L2.6 3.2M13.4 0.4L15.2 1.8L13.4 3.2" stroke="#3e78c0" stroke-width="1" fill="none"/><rect x="0.5" y="5" width="15" height="10.5" fill="#fff" stroke="#6a6a6a" stroke-width="1"/><path d="M0.5 8H15.5M0.5 12H15.5M4.5 5V15.5M11.5 5V15.5" stroke="#9a9a9a" stroke-width="1"/><rect x="5" y="8.5" width="6" height="3" fill="#3e78c0"/></svg>
<svg style="position:absolute;left:891.0px;top:124px" width="5" height="3" viewBox="0 0 5 3"><path d="M0 0H5L2.5 3Z" fill="#777"/></svg>
<svg style="position:absolute;left:918px;top:70.5px" width="16" height="15" viewBox="0 0 16 15"><path d="M14.2 3.6V1H1.4L7.8 7.5L1.4 14H14.2V11.4" fill="none" stroke="#444" stroke-width="1.9" stroke-linejoin="miter"/></svg>
<svg style="position:absolute;left:940.0px;top:79px" width="5" height="3" viewBox="0 0 5 3"><path d="M0 0H5L2.5 3Z" fill="#666"/></svg>
<svg style="position:absolute;left:918.5px;top:94px" width="15" height="16" viewBox="0 0 15 16"><rect x="0.6" y="0.6" width="13.4" height="14.4" fill="#fff" stroke="#666" stroke-width="1.2"/><rect x="0.6" y="0.6" width="13.4" height="3" fill="#666"/><path d="M7.3 5.6V12.4M4.2 9.4L7.3 12.6L10.4 9.4" fill="none" stroke="#3e78c0" stroke-width="1.6"/></svg>
<svg style="position:absolute;left:938.0px;top:101px" width="5" height="3" viewBox="0 0 5 3"><path d="M0 0H5L2.5 3Z" fill="#666"/></svg>
<svg style="position:absolute;left:919px;top:117.5px" width="14" height="10" viewBox="0 0 14 10"><g transform="rotate(-38 7 5)"><rect x="0" y="1.8" width="14.5" height="6.4" rx="1.2" fill="#ea8a9c"/><rect x="0" y="1.8" width="4" height="6.4" rx="1.2" fill="#f4b9c4"/></g></svg>
<svg style="position:absolute;left:938.0px;top:124px" width="5" height="3" viewBox="0 0 5 3"><path d="M0 0H5L2.5 3Z" fill="#666"/></svg>
<div class="t" style="left:963.4px;top:71.6px;font-size:15px;line-height:16px;color:#3e78c0;font-weight:700;transform:scaleX(0.93)">A</div>
<div class="t" style="left:963.8px;top:85.8px;font-size:15px;line-height:16px;color:#9a57b8;font-weight:700;transform:scaleX(1.0)">Z</div>
<svg style="position:absolute;left:975px;top:80.5px" width="18" height="16" viewBox="0 0 18 16"><path d="M0.6 0.8H17L10.6 7.6H7Z" fill="#878787" stroke="#777" stroke-width="1" stroke-linejoin="round"/><path d="M7.2 7.4H10.4V14.6L7.2 12.4Z" fill="#d8d8d8" stroke="#777" stroke-width="1"/></svg>
<svg style="position:absolute;left:991.0px;top:128.2px" width="5" height="3" viewBox="0 0 5 3"><path d="M0 0H5L2.5 3Z" fill="#777"/></svg>
<svg style="position:absolute;left:1029px;top:73px" width="28" height="28" viewBox="0 0 28 28"><circle cx="17.3" cy="10.2" r="8.8" fill="#fff" stroke="#3e78c0" stroke-width="2.2"/><path d="M11.5 16L2 25.5" stroke="#3e78c0" stroke-width="3.4" stroke-linecap="round"/></svg>
<svg style="position:absolute;left:1071.0px;top:128.2px" width="5" height="3" viewBox="0 0 5 3"><path d="M0 0H5L2.5 3Z" fill="#777"/></svg>
<div class="t" style="left:26.00px;top:9.50px;font-size:12px;line-height:17px;color:#66a281;transform:scaleX(1.0168);">Autoguardado</div>
<div class="t" style="left:544.30px;top:9.80px;font-size:12px;line-height:17px;color:#ffffff;transform:scaleX(0.9110);">TEXTO_PLANO  -  Excel</div>
<div class="t" style="left:850.00px;top:8.80px;font-size:12px;line-height:17px;color:#ffffff;transform:scaleX(0.9671);">Julio Alexander Candela Rincon</div>
<div class="t" style="left:12.00px;top:41.50px;font-size:12px;line-height:17px;color:#ffffff;transform:scaleX(1.0164);">Archivo</div>
<div class="t" style="left:75.94px;top:41.50px;font-size:12px;line-height:17px;color:#217346;transform:scaleX(1.0607);">Inicio</div>
<div class="t" style="left:134.02px;top:41.50px;font-size:12px;line-height:17px;color:#ffffff;transform:scaleX(0.9827);">Insertar</div>
<div class="t" style="left:203.00px;top:41.50px;font-size:12px;line-height:17px;color:#ffffff;transform:scaleX(0.9709);">Diseño de página</div>
<div class="t" style="left:323.00px;top:41.50px;font-size:12px;line-height:17px;color:#ffffff;transform:scaleX(0.9798);">Fórmulas</div>
<div class="t" style="left:401.50px;top:41.50px;font-size:12px;line-height:17px;color:#ffffff;transform:scaleX(0.9411);">Datos</div>
<div class="t" style="left:460.00px;top:41.50px;font-size:12px;line-height:17px;color:#ffffff;transform:scaleX(0.9095);">Revisar</div>
<div class="t" style="left:526.00px;top:41.50px;font-size:12px;line-height:17px;color:#ffffff;transform:scaleX(0.9333);">Vista</div>
<div class="t" style="left:597.20px;top:41.80px;font-size:12px;line-height:17px;color:#d3e6da;transform:scaleX(0.9004);">¿Qué desea hacer?</div>
<div class="t" style="left:1148.00px;top:41.50px;font-size:12px;line-height:17px;color:#ffffff;transform:scaleX(1.0251);">Compartir</div>
<div class="t" style="left:15.50px;top:106.50px;font-size:11px;line-height:15px;color:#262626;transform:scaleX(0.9936);">Pegar</div>
<div class="t" style="left:6.70px;top:141.50px;font-size:11px;line-height:15px;color:#262626;transform:scaleX(1.0073);">Portapapeles</div>
<div class="t" style="left:100.50px;top:79.50px;font-size:12px;line-height:17px;color:#262626;transform:scaleX(1.0047);">Calibri</div>
<div class="t" style="left:212.00px;top:79.50px;font-size:12px;line-height:17px;color:#262626;transform:scaleX(0.8214);">11</div>
<div class="t" style="left:103.50px;top:108.50px;font-size:13px;line-height:18px;color:#444;transform:scaleX(1.0000);font-weight:700;">N</div>
<div class="t" style="left:125.00px;top:108.50px;font-size:13px;line-height:18px;color:#444;transform:scaleX(0.7273);font-weight:700;font-style:italic;">K</div>
<div class="t" style="left:148.30px;top:108.30px;font-size:13px;line-height:18px;color:#444;transform:scaleX(0.8333);font-weight:700;text-decoration:underline;">S</div>
<div class="t" style="left:170.00px;top:141.50px;font-size:11px;line-height:15px;color:#262626;transform:scaleX(1.0548);">Fuente</div>
<div class="t" style="left:347.00px;top:141.50px;font-size:11px;line-height:15px;color:#262626;transform:scaleX(1.0565);">Alineación</div>
<div class="t" style="left:473.50px;top:79.50px;font-size:12px;line-height:17px;color:#262626;transform:scaleX(0.9280);">General</div>
<div class="t" style="left:477.70px;top:106.20px;font-size:17px;line-height:24px;color:#555;transform:scaleX(0.7600);-webkit-text-stroke:0.35px #555;">$</div>
<div class="t" style="left:509.50px;top:107.30px;font-size:15.5px;line-height:22px;color:#555;transform:scaleX(0.8571);-webkit-text-stroke:0.3px #555;">%</div>
<div class="t" style="left:530.00px;top:110.00px;font-size:10.5px;line-height:15px;color:#444;transform:scaleX(0.8032);-webkit-text-stroke:0.3px #444;">000</div>
<div class="t" style="left:507.00px;top:141.50px;font-size:11px;line-height:15px;color:#262626;transform:scaleX(1.0255);">Número</div>
<div class="t" style="left:625.50px;top:106.50px;font-size:11px;line-height:15px;color:#262626;transform:scaleX(1.0897);">Formato</div>
<div class="t" style="left:612.50px;top:122.50px;font-size:11px;line-height:15px;color:#262626;transform:scaleX(1.1082);">condicional</div>
<div class="t" style="left:689.00px;top:106.50px;font-size:11px;line-height:15px;color:#262626;transform:scaleX(1.0957);">Dar formato</div>
<div class="t" style="left:687.70px;top:122.50px;font-size:11px;line-height:15px;color:#262626;transform:scaleX(1.0788);">como tabla</div>
<div class="t" style="left:760.00px;top:106.50px;font-size:11px;line-height:15px;color:#262626;transform:scaleX(1.0300);">Estilos de</div>
<div class="t" style="left:767.40px;top:122.50px;font-size:11px;line-height:15px;color:#262626;transform:scaleX(0.9971);">celda</div>
<div class="t" style="left:694.50px;top:141.50px;font-size:11px;line-height:15px;color:#262626;transform:scaleX(0.9697);">Estilos</div>
<div class="t" style="left:842.24px;top:72.50px;font-size:11px;line-height:15px;color:#262626;transform:scaleX(1.0566);">Insertar</div>
<div class="t" style="left:843.30px;top:95.00px;font-size:11px;line-height:15px;color:#262626;transform:scaleX(1.0607);">Eliminar</div>
<div class="t" style="left:843.30px;top:118.00px;font-size:11px;line-height:15px;color:#262626;transform:scaleX(1.0897);">Formato</div>
<div class="t" style="left:846.70px;top:141.50px;font-size:11px;line-height:15px;color:#262626;transform:scaleX(0.9470);">Celdas</div>
<div class="t" style="left:952.50px;top:106.50px;font-size:11px;line-height:15px;color:#262626;transform:scaleX(1.0362);">Ordenar y</div>
<div class="t" style="left:959.80px;top:122.50px;font-size:11px;line-height:15px;color:#262626;transform:scaleX(1.1380);">filtrar</div>
<div class="t" style="left:1021.00px;top:106.50px;font-size:11px;line-height:15px;color:#262626;transform:scaleX(1.0117);">Buscar y</div>
<div class="t" style="left:1009.00px;top:122.50px;font-size:11px;line-height:15px;color:#262626;transform:scaleX(1.0540);">seleccionar</div>
<div class="t" style="left:978.00px;top:141.50px;font-size:11px;line-height:15px;color:#262626;transform:scaleX(1.0428);">Edición</div>
<div class="t" style="left:15.50px;top:173.10px;font-size:12px;line-height:17px;color:#262626;transform:scaleX(0.9364);">E16</div>
<div class="t" style="left:64.80px;top:204.50px;font-size:13.2px;line-height:18px;color:#222222;transform:scaleX(0.8889);-webkit-text-stroke:0.15px #222222;">A</div>
<div class="t" style="left:145.05px;top:204.50px;font-size:13.2px;line-height:18px;color:#222222;transform:scaleX(0.7500);-webkit-text-stroke:0.15px #222222;">B</div>
<div class="t" style="left:225.20px;top:204.50px;font-size:13.2px;line-height:18px;color:#222222;transform:scaleX(0.7200);-webkit-text-stroke:0.15px #222222;">C</div>
<div class="t" style="left:308.68px;top:204.50px;font-size:13.2px;line-height:18px;color:#222222;transform:scaleX(0.9250);-webkit-text-stroke:0.15px #222222;">D</div>
<div class="t" style="left:408.68px;top:204.50px;font-size:13.2px;line-height:18px;color:#217346;transform:scaleX(0.7250);-webkit-text-stroke:0.15px #217346;">E</div>
<div class="t" style="left:516.96px;top:204.50px;font-size:13.2px;line-height:18px;color:#222222;transform:scaleX(0.7429);-webkit-text-stroke:0.15px #222222;">F</div>
<div class="t" style="left:609.70px;top:204.50px;font-size:13.2px;line-height:18px;color:#222222;transform:scaleX(0.8200);-webkit-text-stroke:0.15px #222222;">G</div>
<div class="t" style="left:689.05px;top:204.50px;font-size:13.2px;line-height:18px;color:#222222;transform:scaleX(0.9500);-webkit-text-stroke:0.15px #222222;">H</div>
<div class="t" style="left:772.20px;top:204.50px;font-size:13.2px;line-height:18px;color:#222222;transform:scaleX(0.8000);-webkit-text-stroke:0.15px #222222;">I</div>
<div class="t" style="left:851.90px;top:204.50px;font-size:13.2px;line-height:18px;color:#222222;transform:scaleX(0.6333);-webkit-text-stroke:0.15px #222222;">J</div>
<div class="t" style="left:929.55px;top:204.50px;font-size:13.2px;line-height:18px;color:#222222;transform:scaleX(0.8500);-webkit-text-stroke:0.15px #222222;">K</div>
<div class="t" style="left:1010.33px;top:204.50px;font-size:13.2px;line-height:18px;color:#222222;transform:scaleX(0.8667);-webkit-text-stroke:0.15px #222222;">L</div>
<div class="t" style="left:1087.20px;top:204.50px;font-size:13.2px;line-height:18px;color:#222222;transform:scaleX(1.2000);-webkit-text-stroke:0.15px #222222;">M</div>
<div class="t" style="left:1168.92px;top:204.50px;font-size:13.2px;line-height:18px;color:#222222;transform:scaleX(0.9750);-webkit-text-stroke:0.15px #222222;">N</div>
<div class="t" style="left:13.20px;top:226.00px;font-size:13.2px;line-height:18px;color:#222222;transform:scaleX(0.6000);-webkit-text-stroke:0.2px #222222;">1</div>
<div class="t" style="left:12.50px;top:246.50px;font-size:13.2px;line-height:18px;color:#222222;transform:scaleX(0.8857);-webkit-text-stroke:0.2px #222222;">2</div>
<div class="t" style="left:12.50px;top:266.50px;font-size:13.2px;line-height:18px;color:#222222;transform:scaleX(0.8857);-webkit-text-stroke:0.2px #222222;">3</div>
<div class="t" style="left:12.50px;top:287.00px;font-size:13.2px;line-height:18px;color:#222222;transform:scaleX(0.8857);-webkit-text-stroke:0.2px #222222;">4</div>
<div class="t" style="left:12.50px;top:307.50px;font-size:13.2px;line-height:18px;color:#222222;transform:scaleX(0.8857);-webkit-text-stroke:0.2px #222222;">5</div>
<div class="t" style="left:12.50px;top:327.50px;font-size:13.2px;line-height:18px;color:#222222;transform:scaleX(0.8857);-webkit-text-stroke:0.2px #222222;">6</div>
<div class="t" style="left:12.50px;top:347.50px;font-size:13.2px;line-height:18px;color:#222222;transform:scaleX(0.8857);-webkit-text-stroke:0.2px #222222;">7</div>
<div class="t" style="left:12.50px;top:367.50px;font-size:13.2px;line-height:18px;color:#222222;transform:scaleX(0.8857);-webkit-text-stroke:0.2px #222222;">8</div>
<div class="t" style="left:12.50px;top:387.50px;font-size:13.2px;line-height:18px;color:#222222;transform:scaleX(0.8857);-webkit-text-stroke:0.2px #222222;">9</div>
<div class="t" style="left:8.47px;top:407.50px;font-size:13.2px;line-height:18px;color:#222222;transform:scaleX(0.9299);-webkit-text-stroke:0.2px #222222;">10</div>
<div class="t" style="left:47.10px;top:225.50px;font-size:13.2px;line-height:18px;color:#000000;transform:scaleX(0.9459);font-weight:700;">Codigo</div>
<div class="t" style="left:131.00px;top:225.50px;font-size:13.2px;line-height:18px;color:#000000;transform:scaleX(0.9688);font-weight:700;">Cantidad</div>
<div class="t" style="left:207.00px;top:225.50px;font-size:13.2px;line-height:18px;color:#000000;transform:scaleX(1.0007);font-weight:700;">Impuesto</div>
<div class="t" style="left:322.00px;top:225.50px;font-size:13.2px;line-height:18px;color:#000000;transform:scaleX(1.0118);font-weight:700;">Valor</div>
<div class="t" style="left:381.50px;top:225.50px;font-size:13.2px;line-height:18px;color:#000000;transform:scaleX(0.9601);font-weight:700;">Separador</div>
<div class="t" style="left:485.00px;top:225.50px;font-size:13.2px;line-height:18px;color:#000000;transform:scaleX(0.9994);font-weight:700;">TextoPlano</div>
<div class="t" style="left:88.30px;top:244.70px;font-size:10.5px;line-height:15px;color:#000000;transform:scaleX(1.0125);">295</div>
<div class="t" style="left:171.73px;top:246.80px;font-size:13.2px;line-height:18px;color:#000000;transform:scaleX(0.9749);-webkit-text-stroke:0.25px #000000;">10</div>
<div class="t" style="left:258.60px;top:246.80px;font-size:13.2px;line-height:18px;color:#000000;transform:scaleX(1.0000);-webkit-text-stroke:0.25px #000000;">0</div>
<div class="t" style="left:334.40px;top:246.80px;font-size:13.2px;line-height:18px;color:#000000;transform:scaleX(0.9276);-webkit-text-stroke:0.25px #000000;">540</div>
<div class="t" style="left:409.70px;top:246.80px;font-size:13.2px;line-height:18px;color:#000000;transform:scaleX(1.1000);-webkit-text-stroke:0.25px #000000;">,</div>
<div class="t" style="left:483.60px;top:246.80px;font-size:13.2px;line-height:18px;color:#000000;transform:scaleX(0.9704);-webkit-text-stroke:0.25px #000000;">295,10,0,540</div>
<div class="t" style="left:88.30px;top:264.90px;font-size:10.5px;line-height:15px;color:#000000;transform:scaleX(1.0125);">296</div>
<div class="t" style="left:171.90px;top:267.00px;font-size:13.2px;line-height:18px;color:#000000;transform:scaleX(0.9627);-webkit-text-stroke:0.25px #000000;">45</div>
<div class="t" style="left:258.60px;top:267.00px;font-size:13.2px;line-height:18px;color:#000000;transform:scaleX(1.0000);-webkit-text-stroke:0.25px #000000;">0</div>
<div class="t" style="left:334.40px;top:267.00px;font-size:13.2px;line-height:18px;color:#000000;transform:scaleX(0.9276);-webkit-text-stroke:0.25px #000000;">367</div>
<div class="t" style="left:409.70px;top:267.00px;font-size:13.2px;line-height:18px;color:#000000;transform:scaleX(1.1000);-webkit-text-stroke:0.25px #000000;">,</div>
<div class="t" style="left:483.70px;top:267.00px;font-size:13.2px;line-height:18px;color:#000000;transform:scaleX(0.9691);-webkit-text-stroke:0.25px #000000;">296,45,0,367</div>
<div class="t" style="left:88.30px;top:285.10px;font-size:10.5px;line-height:15px;color:#000000;transform:scaleX(1.0125);">297</div>
<div class="t" style="left:179.10px;top:287.20px;font-size:13.2px;line-height:18px;color:#000000;transform:scaleX(0.9429);-webkit-text-stroke:0.25px #000000;">5</div>
<div class="t" style="left:258.60px;top:287.20px;font-size:13.2px;line-height:18px;color:#000000;transform:scaleX(1.0000);-webkit-text-stroke:0.25px #000000;">0</div>
<div class="t" style="left:334.40px;top:287.20px;font-size:13.2px;line-height:18px;color:#000000;transform:scaleX(0.9276);-webkit-text-stroke:0.25px #000000;">245</div>
<div class="t" style="left:409.70px;top:287.20px;font-size:13.2px;line-height:18px;color:#000000;transform:scaleX(1.1000);-webkit-text-stroke:0.25px #000000;">,</div>
<div class="t" style="left:486.50px;top:287.20px;font-size:13.2px;line-height:18px;color:#000000;transform:scaleX(0.9693);-webkit-text-stroke:0.25px #000000;">297,5,0,245</div>
<div class="t" style="left:627.80px;top:256.60px;font-size:21.3px;line-height:30px;color:#ed1c24;transform:scaleX(0.9703);font-weight:700;">CTRL + C</div>
</div>
</body></html>
